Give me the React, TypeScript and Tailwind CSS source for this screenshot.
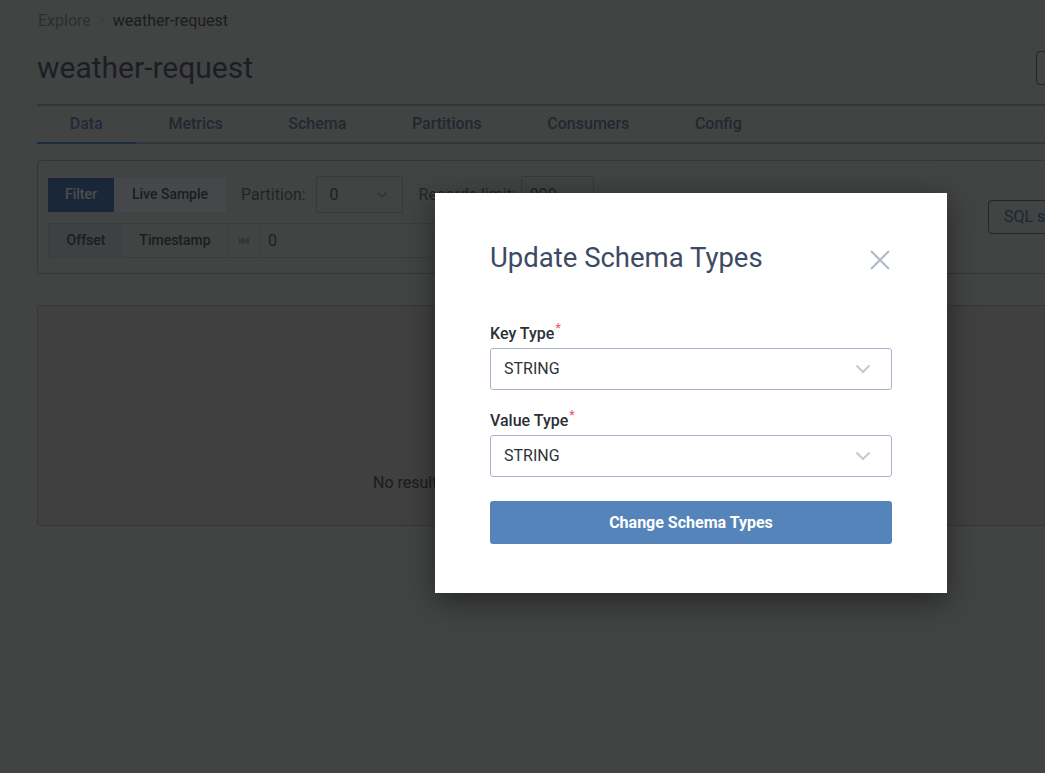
import React from "react";
import { ChevronRight, ChevronDown } from "lucide-react";
import { FaFastBackward } from "react-icons/fa";

const tabs = ["Data", "Metrics", "Schema", "Partitions", "Consumers", "Config"];

const Required = () => (
  <span className="relative -top-[7px] ml-[1px] text-[12px] leading-none text-[#e5606c]">*</span>
);

const SchemaSelect = ({ value }: { value: string }) => (
  <div className="flex h-[42px] w-full items-center justify-between rounded-[3px] border border-[#a9b3c9] bg-white pl-[13px] pr-[20px]">
    <span className="text-[16px] text-[#2f3337]">{value}</span>
    <svg width="16" height="10" viewBox="0 0 16 10" fill="none">
      <path d="M1.5 1.5l6.5 6.5 6.5-6.5" stroke="#c6c9cf" strokeWidth="2" />
    </svg>
  </div>
);

export default function App() {
  return (
    <div className="relative h-[773px] w-[1045px] overflow-hidden bg-[#dde2e0] font-['Roboto',sans-serif]">
      {/* page behind the modal */}
      <div className="w-[1382px] px-[37px]">
        <div className="flex h-[24px] items-center pt-[9px] box-content text-[16px] leading-6">
          <span className="ml-[1px] text-[#959ca7]">Explore</span>
          <ChevronRight className="mx-[5px] h-[12px] w-[12px] text-[#a9b0ba]" strokeWidth={2} />
          <span className="text-[#5b6270]">weather-request</span>
        </div>

        <div className="mt-[17px] flex h-[36px] items-center justify-between">
          <h1 className="text-[30px] leading-9 text-[#5f6779]">weather-request</h1>
          <div className="mr-[-1px] flex gap-[10px]">
            <button className="h-[34px] w-[150px] rounded-[4px] border border-[#5a7fb5] text-[15px] text-[#5a7fb5]">
              Produce Message
            </button>
            <button className="h-[34px] w-[150px] rounded-[4px] border border-[#5a7fb5] text-[15px] text-[#5a7fb5]">
              Clear Messages
            </button>
          </div>
        </div>

        <div className="mt-[18px] flex border-y-2 border-[#adb2bd]">
          {tabs.map((t, i) => (
            <div
              key={t}
              className={`-mb-[2px] flex h-[38px] items-center px-[32.8px] text-[16px] font-medium ${
                i === 0 ? "border-b-2 border-[#6490d6] text-[#6f8bbd]" : "border-b-2 border-transparent text-[#7a849c]"
              }`}
            >
              {t}
            </div>
          ))}
        </div>

        {/* filters */}
        <div className="mt-[16px] flex h-[114px] items-center rounded-[4px] border border-[#b0b6b9] pl-[10px] pr-[10px]">
          <div className="flex w-[700px] flex-col gap-[10px]">
            <div className="flex h-[37px] items-center">
              <div className="flex h-[34px]">
                <button className="w-[66px] bg-[#5584bb] text-[14px] font-medium text-white">Filter</button>
                <button className="w-[112px] bg-[#e9eef8] text-[14px] font-medium text-[#5b6272]">Live Sample</button>
              </div>
              <span className="ml-[15px] text-[16px] text-[#737a86]">Partition:</span>
              <div className="ml-[10px] flex h-[37px] w-[87px] items-center justify-between rounded-[2px] border border-[#b5bcc7] pl-[13px] pr-[12px]">
                <span className="text-[16px] text-[#666c78]">0</span>
                <ChevronDown className="h-[16px] w-[16px] text-[#9da3ad]" strokeWidth={2.5} />
              </div>
              <span className="ml-[16px] text-[16px] text-[#737a86]">Records limit:</span>
              <div className="ml-[5px] flex h-[37px] w-[73px] items-center rounded-[2px] border border-[#b5bcc7] pl-[8px] text-[16px] text-[#666c78]">
                999
              </div>
            </div>
            <div className="flex h-[35px] w-[560px] border border-[#c3c9d0]">
              <button className="w-[74px] bg-[#d0d6e2] text-[14px] font-medium text-[#5b6272]">Offset</button>
              <button className="w-[105px] border-r border-[#c3c9d0] text-[14px] font-medium text-[#5b6272]">Timestamp</button>
              <div className="flex w-[31px] items-center justify-center">
                <FaFastBackward className="h-[10px] w-[10px] text-[#aab1bd]" />
              </div>
              <div className="flex flex-1 items-center border-x border-[#c3c9d0] pl-[8px] text-[16px] text-[#666c78]">0</div>
            </div>
          </div>
          <div className="ml-[240px] flex gap-[10px]">
            <button className="h-[34px] rounded-[4px] border border-[#5a7fb5] px-[15px] text-[16px] text-[#5a7fb5]">
              SQL search
            </button>
          </div>
        </div>

        {/* results */}
        <div className="mt-[31px] h-[221px] rounded-[3px] border border-[#b3b7ba] bg-[#d6d6d6] pl-[335px] pt-[165px]">
          <span className="text-[16px] text-[#5b616b]">No results found for the selected filters. Try another offset or partition.</span>
        </div>
      </div>

      {/* modal */}
      <div className="absolute inset-0 flex items-start bg-black/70 pl-[435px] pt-[193px]">
        <div className="h-[400px] w-[512px] bg-white px-[55px] pt-[47px] shadow-[0_8px_28px_rgba(0,0,0,0.45)]">
          <div className="flex items-start justify-between">
            <h2 className="text-[27.5px] leading-9 text-[#3d4a63]">Update Schema Types</h2>
            <button className="mr-[2px] mt-[10px]" aria-label="Close">
              <svg width="20" height="20" viewBox="0 0 20 20" fill="none">
                <path d="M1 1l18 18M19 1L1 19" stroke="#b2bacb" strokeWidth="2.2" />
              </svg>
            </button>
          </div>

          <div className="mt-[46px]">
            <label className="block text-[16px] font-medium leading-6 text-[#2b2f36]">
              Key Type
              <Required />
            </label>
            <div className="mt-[2px]">
              <SchemaSelect value="STRING" />
            </div>
          </div>

          <div className="mt-[19px]">
            <label className="block text-[16px] font-medium leading-6 text-[#2b2f36]">
              Value Type
              <Required />
            </label>
            <div className="mt-[2px]">
              <SchemaSelect value="STRING" />
            </div>
          </div>

          <button className="mt-[24px] h-[43px] w-full rounded-[3px] bg-[#5584bb] text-[16px] font-bold text-white">
            Change Schema Types
          </button>
        </div>
      </div>
    </div>
  );
}
